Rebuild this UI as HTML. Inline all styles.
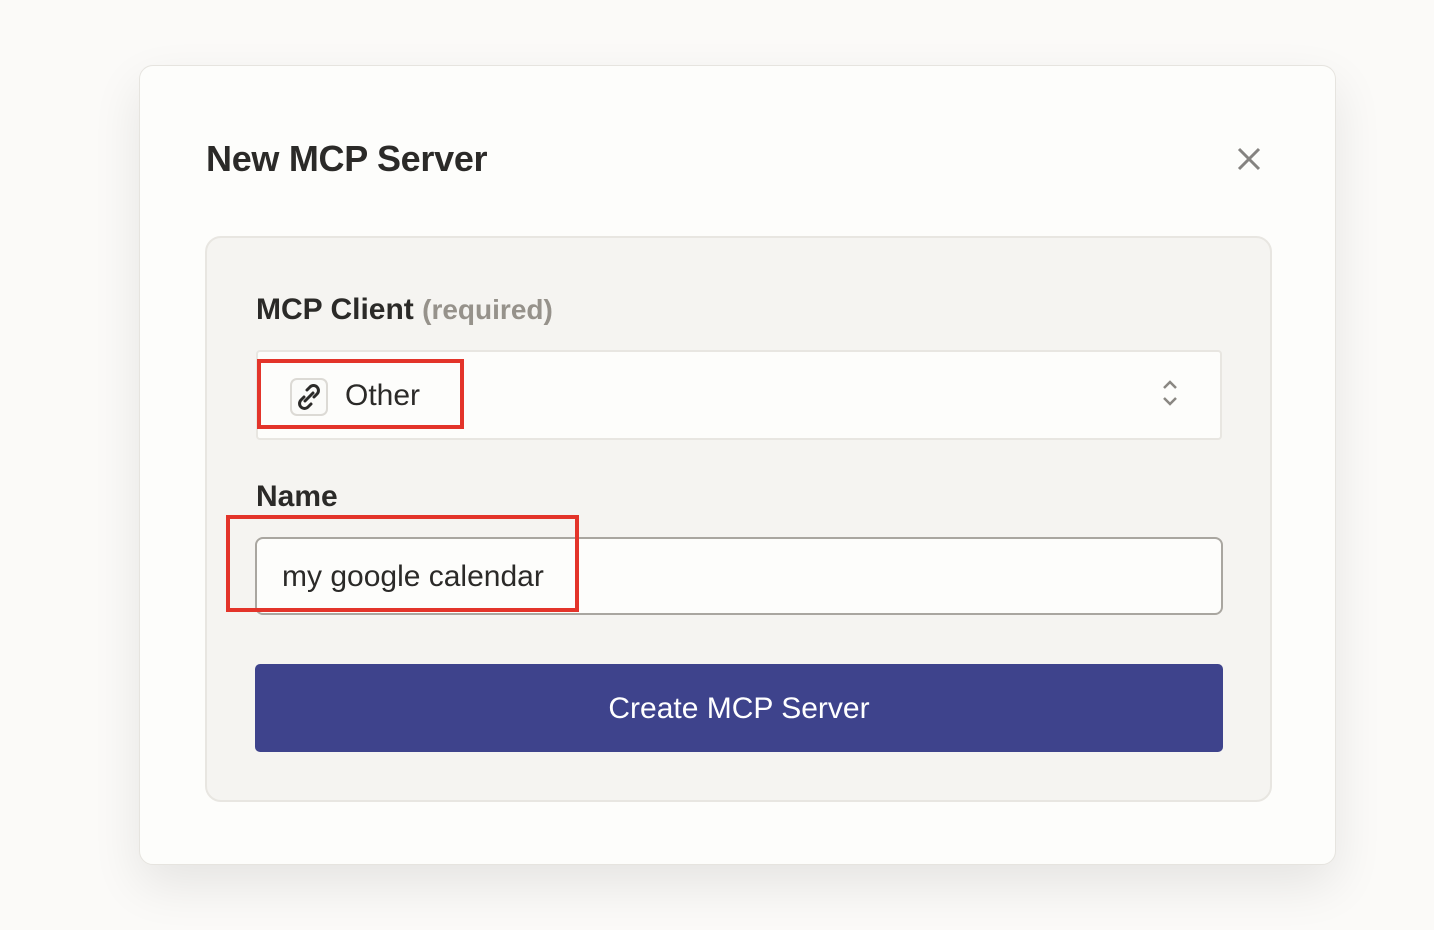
<!DOCTYPE html>
<html><head><style>
body{margin:0;width:1434px;height:930px;background:#fbfaf8;font-family:"Liberation Sans",sans-serif;position:relative;overflow:hidden}
.modal{position:absolute;left:139px;top:65px;width:1197px;height:800px;background:#fdfdfb;border:1px solid #e6e4df;border-radius:14px;box-shadow:0 20px 50px rgba(0,0,0,.09);box-sizing:border-box}
h1{position:absolute;left:66px;top:72px;margin:0;font-size:36px;font-weight:bold;color:#2b2a28;letter-spacing:-.3px}
.x{position:absolute;left:1096px;top:80px}
.panel{position:absolute;left:65px;top:170px;width:1067px;height:566px;background:#f5f4f1;border:2px solid #e8e6e1;border-radius:16px;box-sizing:border-box}
.lbl{position:absolute;left:49px;font-size:30px;font-weight:bold;color:#2b2a28}
.req{color:#96928b;font-size:28px}
.sel{position:absolute;left:49px;top:112px;width:966px;height:90px;background:#fdfdfb;border:2px solid #e8e6e1;border-radius:4px;box-sizing:border-box}
.inp{position:absolute;left:48px;top:299px;width:968px;height:78px;background:#fdfdfb;border:2px solid #a9a6a0;border-radius:8px;box-sizing:border-box;font-size:30px;color:#2b2a28;padding:21px 0 0 25px}
.btn{position:absolute;left:48px;top:426px;width:968px;height:88px;background:#3e438c;border-radius:5px;color:#fff;font-size:30px;text-align:center;line-height:90px}
.red{position:absolute;border:4px solid #e3342a;box-sizing:border-box}
</style></head><body>
<div class="modal">
<h1>New MCP Server</h1>
<svg class="x" width="26" height="26" viewBox="0 0 26 26"><path d="M3 3L23 23M23 3L3 23" stroke="#858380" stroke-width="3"/></svg>
<div class="panel">
<div class="lbl" style="top:55px">MCP Client <span class="req">(required)</span></div>
<div class="sel">
<div style="position:absolute;left:32px;top:26px;width:38px;height:38px;border:2px solid #dcdad5;border-radius:7px;background:#fbfbf9;box-sizing:border-box">
<svg width="34" height="34" viewBox="0 0 34 34" style="position:absolute;left:0;top:0"><g fill="none" stroke="#2b2a28" stroke-width="3" stroke-linecap="round"><path d="M15 10l3-3a4.5 4.5 0 0 1 7 7l-3 3"/><path d="M19 24l-3 3a4.5 4.5 0 0 1-7-7l3-3"/><path d="M13 21l8-8"/></g></svg></div>
<div style="position:absolute;left:87px;top:27px;font-size:30px;color:#2b2a28">Other</div>
<svg style="position:absolute;left:902px;top:26px" width="20" height="30" viewBox="0 0 20 30"><path d="M4 10l6-6 6 6M4 20l6 6 6-6" fill="none" stroke="#8a8782" stroke-width="2.5"/></svg>
</div>
<div class="lbl" style="top:242px">Name</div>
<div class="inp">my google calendar</div>
<div class="btn">Create MCP Server</div>
</div>
</div>
<div class="red" style="left:257px;top:359px;width:207px;height:70px"></div>
<div class="red" style="left:226px;top:515px;width:353px;height:97px"></div>
</body></html>
